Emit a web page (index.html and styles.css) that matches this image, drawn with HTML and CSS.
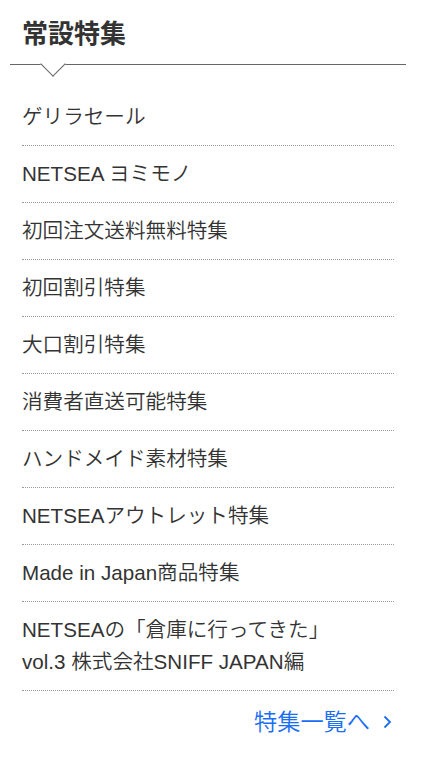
FILE: index.html
```html
<!DOCTYPE html>
<html lang="ja">
<head>
<meta charset="utf-8">
<link rel="stylesheet" href="styles.css">
</head>
<body>
<section class="feature">
  <header class="feature-head">
    <h2 class="feature-title">常設特集</h2>
    <span class="notch"></span>
  </header>
  <ul class="feature-list">
    <li class="feature-item"><a href="#">ゲリラセール</a></li>
    <li class="feature-item"><a href="#">NETSEA ヨミモノ</a></li>
    <li class="feature-item"><a href="#">初回注文送料無料特集</a></li>
    <li class="feature-item"><a href="#">初回割引特集</a></li>
    <li class="feature-item"><a href="#">大口割引特集</a></li>
    <li class="feature-item"><a href="#">消費者直送可能特集</a></li>
    <li class="feature-item"><a href="#">ハンドメイド素材特集</a></li>
    <li class="feature-item"><a href="#">NETSEAアウトレット特集</a></li>
    <li class="feature-item"><a href="#">Made in Japan商品特集</a></li>
    <li class="feature-item"><a href="#">NETSEAの「倉庫に行ってきた」<br>vol.3 株式会社SNIFF JAPAN編</a></li>
  </ul>
  <div class="more">
    <a class="more-link" href="#">特集一覧へ<svg class="chev" width="9" height="14" viewBox="0 0 9 14"><path d="M1.5 1.5 L7 7 L1.5 12.5" fill="none" stroke="currentColor" stroke-width="1.8"/></svg></a>
  </div>
</section>
</body>
</html>
```
FILE: styles.css
```css
* { box-sizing: border-box; }
html, body { margin: 0; padding: 0; background: #fff; }
body {
  font-family: "Liberation Sans", "Noto Sans CJK JP", sans-serif;
  color: #333;
}
.feature {
  width: 396px;
  margin-left: 10px;
}
.feature-head {
  position: relative;
  height: 65px;
  border-bottom: 1px solid #666;
  padding: 14px 12px 0;
}
.feature-title {
  margin: 0;
  font-family: "Noto Sans CJK JP", sans-serif;
  font-size: 26px;
  line-height: 36px;
  font-weight: 700;
  color: #333;
}
.notch {
  position: absolute;
  left: 34px;
  top: 55px;
  width: 18px;
  height: 18px;
  background: #fff;
  border-right: 1px solid #666;
  border-bottom: 1px solid #666;
  transform: rotate(45deg);
}
.feature-list {
  list-style: none;
  margin: 24px 12px 0;
  padding: 0;
}
.feature-item {
  border-bottom: 1px dotted #999;
  padding: 12px 0;
  font-size: 20.6px;
  font-weight: 350;
  line-height: 32px;
}
.feature-item a {
  color: #333;
  text-decoration: none;
}
.more {
  display: flex;
  justify-content: flex-end;
  padding: 15px 14px 0 0;
}
.more-link {
  display: flex;
  align-items: center;
  gap: 13px;
  color: #1a6ef5;
  text-decoration: none;
  font-size: 23.2px;
  font-weight: 350;
  line-height: 32px;
}
.chev { display: block; }
```
